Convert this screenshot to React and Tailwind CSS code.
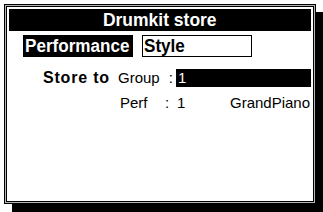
export default function App() {
  return (
    <div className="w-[323px] h-[212px] bg-white overflow-hidden" style={{ fontFamily: '"Liberation Sans", Arial, sans-serif' }}>
      <div className="ml-[4px] mt-[4px] w-[312px] h-[200px] border border-black bg-[#b8b8b8] p-[1px] shadow-[8px_8px_0_#000]">
        <div className="w-full h-full border border-black bg-white p-[2px] flex flex-col">
          <div className="h-[22px] bg-black text-white font-bold text-[19px] leading-[22px] flex justify-center">
            <span className="inline-block scale-x-[0.92]">Drumkit store</span>
          </div>
          <div className="flex mt-[4px] ml-[14px] gap-[9px]">
            <div className="h-[22px] w-[110px] bg-black text-white font-bold text-[18px] leading-[22px] pl-[2px]">
              <span className="inline-block origin-left scale-x-[0.95]">Performance</span>
            </div>
            <div className="h-[22px] w-[110px] border border-black text-black font-bold text-[18px] leading-[20px] pl-[1px]">
              <span className="inline-block origin-left scale-x-[0.95]">Style</span>
            </div>
          </div>
          <div className="flex items-center mt-[12px] h-[18px]">
            <div className="ml-[34px] w-[75px] font-bold text-[16px] tracking-[0.8px] text-black">Store to</div>
            <div className="w-[58px] text-[15px] text-black flex justify-between pr-[3px]"><span>Group</span><span>:</span></div>
            <div className="flex-1 h-[18px] bg-black text-white text-[15px] leading-[18px] pl-[2px]">1</div>
          </div>
          <div className="flex items-center mt-[8px] h-[16px] text-[15px] text-black">
            <div className="ml-[111px] w-[45px]">Perf</div>
            <div className="w-[65px] flex"><span className="w-[12px]">:</span><span>1</span></div>
            <div>GrandPiano</div>
          </div>
        </div>
      </div>
    </div>
  );
}
